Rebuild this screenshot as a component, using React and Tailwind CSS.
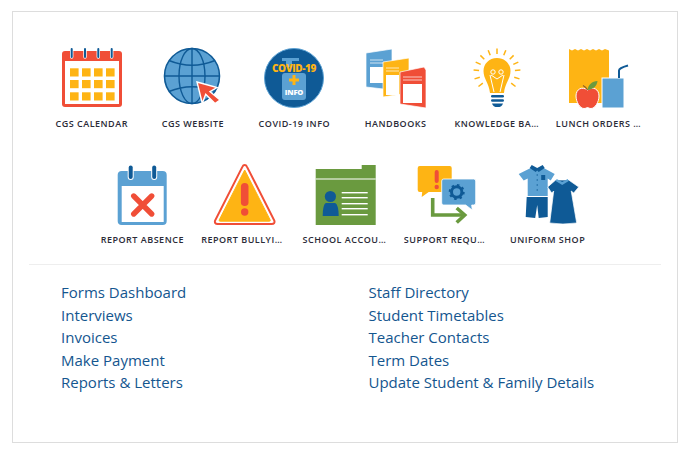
const BLUE = '#5ba1d3';
const NAVY = '#0f5a96';
const RED = '#f04e37';
const YELLOW = '#feb414';
const GREEN = '#6a9a3f';

const Icon = ({ children, shifted }) => (
  <svg width="64" height="64" viewBox={shifted ? '-0.7 0 64 64' : '0 0 64 64'} className="block">
    {children}
  </svg>
);

const Calendar = () => (
  <Icon>
    <rect x="2" y="5" width="60" height="56" rx="3" fill={RED} />
    <rect x="5" y="15" width="54" height="43" fill="#fff" />
    {[11.7, 25, 38.3, 51.7].map(x => (
      <g key={x}>
        <line x1={x} y1="3" x2={x} y2="11" stroke="#fff" strokeWidth="3.4" strokeLinecap="round" />
        <line x1={x} y1="3" x2={x} y2="11" stroke={NAVY} strokeWidth="2" strokeLinecap="round" />
      </g>
    ))}
    {[22.3, 34, 46.3].map(y =>
      [10, 22, 34, 46].map(x => (
        <rect key={`${x}-${y}`} x={x} y={y} width="8.6" height="8.2" fill={YELLOW} />
      ))
    )}
  </Icon>
);

const Globe = () => (
  <Icon>
    <circle cx="31" cy="30" r="27.5" fill={BLUE} stroke={NAVY} strokeWidth="1.6" />
    <g fill="none" stroke={NAVY} strokeWidth="1.4">
      <ellipse cx="31" cy="30" rx="13" ry="27.5" />
      <line x1="31" y1="2.5" x2="31" y2="57.5" />
      <line x1="3.5" y1="30" x2="58.5" y2="30" />
      <path d="M8 14.5 Q31 24 54 14.5" />
      <path d="M8 45.5 Q31 36 54 45.5" />
    </g>
    <path
      d="M36 36 L56 41.5 L49 45.7 L59 54 L54 57.5 L44.7 48.3 L41.3 57.3 Z"
      fill={RED}
      stroke="#fff"
      strokeWidth="1.4"
    />
  </Icon>
);

const Covid = () => (
  <Icon>
    <circle cx="32" cy="32" r="29.5" fill={NAVY} stroke={BLUE} strokeWidth="1" />
    <path d="M20 12h17v3h-7v6h-6v-6h-4z" fill={BLUE} />
    <rect x="20" y="27" width="24" height="27" rx="3" fill={BLUE} />
    <text x="32" y="25.5" textAnchor="middle" fontSize="10" fontWeight="800" fill={YELLOW} letterSpacing="-0.4">
      COVID-19
    </text>
    <path d="M30.5 29h3v3.5H37v3h-3.5V39h-3v-3.5H27v-3h3.5z" fill={YELLOW} />
    <text x="32" y="49" textAnchor="middle" fontSize="7.6" fontWeight="800" fill="#fff" letterSpacing="-0.2">
      INFO
    </text>
  </Icon>
);

const Book = ({ pts, color, x, y, w, h }) => (
  <g>
    <polygon points={pts} fill={color} stroke="#fff" strokeWidth="0.7" />
    <rect x={x} y={y - 7.5} width={w} height="1" fill="#fff" opacity="0.7" />
    <rect x={x} y={y - 4.5} width={w} height="1" fill="#fff" opacity="0.7" />
    <rect x={x} y={y} width={w} height={h} fill="#fff" />
  </g>
);

const Handbooks = () => (
  <Icon>
    <Book pts="2,7 28,3 28,44 2,41" color={BLUE} x="6" y="21" w="13" h="16" />
    <Book pts="19,16 45,12 45,47 19,51" color={YELLOW} x="22" y="29" w="13" h="20" />
    <Book pts="36,26 60,21 62,24 62,62 36,58" color={RED} x="39" y="38" w="19" h="19" />
  </Icon>
);

const rays = [-175, -155, -135, -112, -90, -68, -45, -25, -5, 17, 38, 142, 163];

const Bulb = () => (
  <Icon>
    {rays.map(a => {
      const r = (a * Math.PI) / 180;
      return (
        <line
          key={a}
          x1={32 + 18 * Math.cos(r)}
          y1={26 + 18 * Math.sin(r)}
          x2={32 + 23.5 * Math.cos(r)}
          y2={26 + 23.5 * Math.sin(r)}
          stroke={YELLOW}
          strokeWidth="1.5"
        />
      );
    })}
    <path
      d="M32 12 C40 12 45.5 18 45.5 25 C45.5 33 40 37 39 47 L25 47 C24 37 18.5 33 18.5 25 C18.5 18 24 12 32 12 Z"
      fill={YELLOW}
    />
    <g fill="none" stroke="#fff" strokeWidth="1">
      <circle cx="28" cy="26" r="2.2" />
      <circle cx="36" cy="26" r="2.2" />
      <path d="M25 29 L29 46 M39 29 L35 46 M26 29 L32 33 L38 29" />
    </g>
    <rect x="26" y="49" width="13" height="2.6" rx="1.3" fill={NAVY} />
    <rect x="26" y="53.2" width="13" height="2.6" rx="1.3" fill={NAVY} />
    <path d="M27 57.4h11q-1 3.6-5.5 3.6t-5.5-3.6z" fill={NAVY} />
  </Icon>
);

const Lunch = () => (
  <Icon>
    <path
      d="M3 3 l3 1.4 3-1.4 3 1.4 3-1.4 3 1.4 3-1.4 3 1.4 3-1.4 3 1.4 3-1.4 3 1.4 3-1.4 4 1.4 V57 H3 Z"
      fill={YELLOW}
    />
    <rect x="36" y="32" width="22" height="30" fill={BLUE} stroke="#fff" strokeWidth="1" />
    <path d="M53 32 V24.5 Q53 22 62 19.5" fill="none" stroke={NAVY} strokeWidth="2" />
    <path
      d="M21.5 44 C16 40 10 43 10 50 C10 56 14 62.5 18 62.5 C20 62.5 20.5 61.5 21.5 61.5 C22.5 61.5 23 62.5 25 62.5 C29 62.5 33 56 33 50 C33 43 27 40 21.5 44 Z"
      fill={RED}
      stroke="#fff"
      strokeWidth="1"
    />
    <path d="M21.5 44 C22 39 26 35 31.5 35 C31 40 27 43.5 21.5 44 Z" fill={GREEN} />
    <path d="M21.5 44 Q20 41 17 39.5" fill="none" stroke="#8a5a2b" strokeWidth="1.2" />
  </Icon>
);

const Absence = () => (
  <Icon shifted>
    <rect x="7" y="9" width="49" height="54" rx="4" fill={BLUE} />
    <rect x="11" y="24" width="42" height="36" fill="#fff" />
    <line x1="20" y1="5.5" x2="20" y2="15" stroke="#fff" strokeWidth="6" strokeLinecap="round" />
    <line x1="43.5" y1="5.5" x2="43.5" y2="15" stroke="#fff" strokeWidth="6" strokeLinecap="round" />
    <line x1="20" y1="5.5" x2="20" y2="15" stroke={NAVY} strokeWidth="4" strokeLinecap="round" />
    <line x1="43.5" y1="5.5" x2="43.5" y2="15" stroke={NAVY} strokeWidth="4" strokeLinecap="round" />
    <path d="M23 34 L41 52 M41 34 L23 52" stroke={RED} strokeWidth="5.4" strokeLinecap="round" />
  </Icon>
);

const Warning = () => (
  <Icon shifted>
    <path d="M32 8 L57.5 58 Q58 59.2 56.5 59.2 H7.5 Q6 59.2 6.5 58 Z" fill={YELLOW} stroke={YELLOW} strokeWidth="1" strokeLinejoin="round" />
    <path d="M32 3 Q33.5 3 34.2 4.6 L61.6 58.5 Q62.6 62 59 62 H5 Q1.4 62 2.4 58.5 L29.8 4.6 Q30.5 3 32 3 Z" fill="none" stroke={RED} strokeWidth="2" />
    <rect x="28.2" y="21" width="7.6" height="23" rx="3.8" fill={RED} />
    <circle cx="32" cy="50" r="3.7" fill={RED} />
  </Icon>
);

const School = () => (
  <Icon shifted>
    <path d="M2 7 H48 V3 H62 V63 H2 Z" fill={GREEN} />
    <rect x="2" y="16.5" width="60" height="1" fill="#fff" />
    <circle cx="16.7" cy="34.5" r="5.6" fill={NAVY} />
    <path d="M12 41 H21.5 Q25 43 25 54 H9 Q9 43 12 41 Z" fill={NAVY} />
    {[30, 35, 41, 46, 52].map(y => (
      <rect key={y} x="28" y={y} width="26" height="1.4" fill="#fff" />
    ))}
  </Icon>
);

const Support = () => (
  <Icon shifted>
    <path d="M5 4 H35 Q37 4 37 6 V28 Q37 30 35 30 H14 L7 35 L7.5 30 H5 Q3 30 3 28 V6 Q3 4 5 4 Z" fill={YELLOW} />
    <rect x="20" y="8" width="4" height="13" rx="2" fill={RED} />
    <circle cx="22" cy="25" r="2.2" fill={RED} />
    <path d="M18 36 V53 H49" fill="none" stroke={GREEN} strokeWidth="3.6" />
    <path d="M42 46 L50 53 L42 60.5" fill="none" stroke={GREEN} strokeWidth="3.6" />
    <path d="M29 17 H59 Q61 17 61 19 V41 Q61 43 59 43 H57 L57.5 48 L51 43 H29 Q27 43 27 41 V19 Q27 17 29 17 Z" fill={BLUE} stroke="#fff" strokeWidth="0.8" />
    <circle cx="42" cy="30" r="5.2" fill="none" stroke={NAVY} strokeWidth="3" />
    <circle cx="42" cy="30" r="7" fill="none" stroke={NAVY} strokeWidth="2" strokeDasharray="2.5 3" />
  </Icon>
);

const Uniform = () => (
  <Icon shifted>
    <path d="M14 6 H27 L38 12 L34 18.5 L31 16.5 V34 H11 V16.5 L7 18.5 L2 12 Z" fill={BLUE} />
    <path d="M15 3 L20.5 6 L26 3 L28 6 L22 10 L20.5 8.5 L19 10 L13 6 Z" fill={NAVY} />
    <rect x="24.5" y="13" width="4" height="5" fill={NAVY} />
    {[13, 18, 23, 28].map(y => (
      <circle key={y} cx="20.5" cy={y} r="0.7" fill={NAVY} />
    ))}
    <path d="M10 35 H31 V55 L22 56 L20.5 43 L18.5 56 L9 55 Z" fill={NAVY} />
    <path d="M39 18 L52 18 L62 25 L57 31 L54.5 29 L60 61 Q46 63 33 61 L37 29 L35 31 L31 25 Z" fill={NAVY} stroke="#fff" strokeWidth="0.7" />
    <path d="M40 17 L45.5 20 L51 17 L52 19 L45.5 23 L39 19 Z" fill={BLUE} />
  </Icon>
);

const tiles = [
  ['CGS Calendar', Calendar],
  ['CGS Website', Globe],
  ['COVID-19 Info', Covid],
  ['Handbooks', Handbooks],
  ['Knowledge Base', Bulb],
  ['Lunch Orders & More', Lunch],
  ['Report Absence', Absence],
  ['Report Bullying', Warning],
  ['School Account', School],
  ['Support Request', Support],
  ['Uniform Shop', Uniform],
];

const leftLinks = ['Forms Dashboard', 'Interviews', 'Invoices', 'Make Payment', 'Reports & Letters'];
const rightLinks = ['Staff Directory', 'Student Timetables', 'Teacher Contacts', 'Term Dates', 'Update Student & Family Details'];

const LinkColumn = ({ links }) => (
  <ul>
    {links.map(link => (
      <li key={link} className="text-[15px] leading-[22.5px] text-[#14568f]">
        {link}
      </li>
    ))}
  </ul>
);

const App = () => {
  return (
    <div className="w-[690px] h-[453px] pt-[11px] pl-3 bg-white font-['Open_Sans',sans-serif]">
      <div className="w-[666px] h-[432px] border border-[#dddddd] px-4 pt-[34px]">
        <div className="flex flex-wrap justify-center border-b border-[#eeeeee] h-[219px]">
          {tiles.map(([label, Tile]) => (
            <div key={label} className="w-[101.33px] h-[116px] flex flex-col items-center">
              <Tile />
              <div className="mt-[7px] w-[85px] truncate text-center text-[9px] leading-[14px] font-semibold uppercase tracking-[0.5px] text-[#2b2b38]">
                {label}
              </div>
            </div>
          ))}
        </div>
        <div className="grid grid-cols-[307.5px_1fr] pl-8 pt-4">
          <LinkColumn links={leftLinks} />
          <LinkColumn links={rightLinks} />
        </div>
      </div>
    </div>
  );
};

export default App;
